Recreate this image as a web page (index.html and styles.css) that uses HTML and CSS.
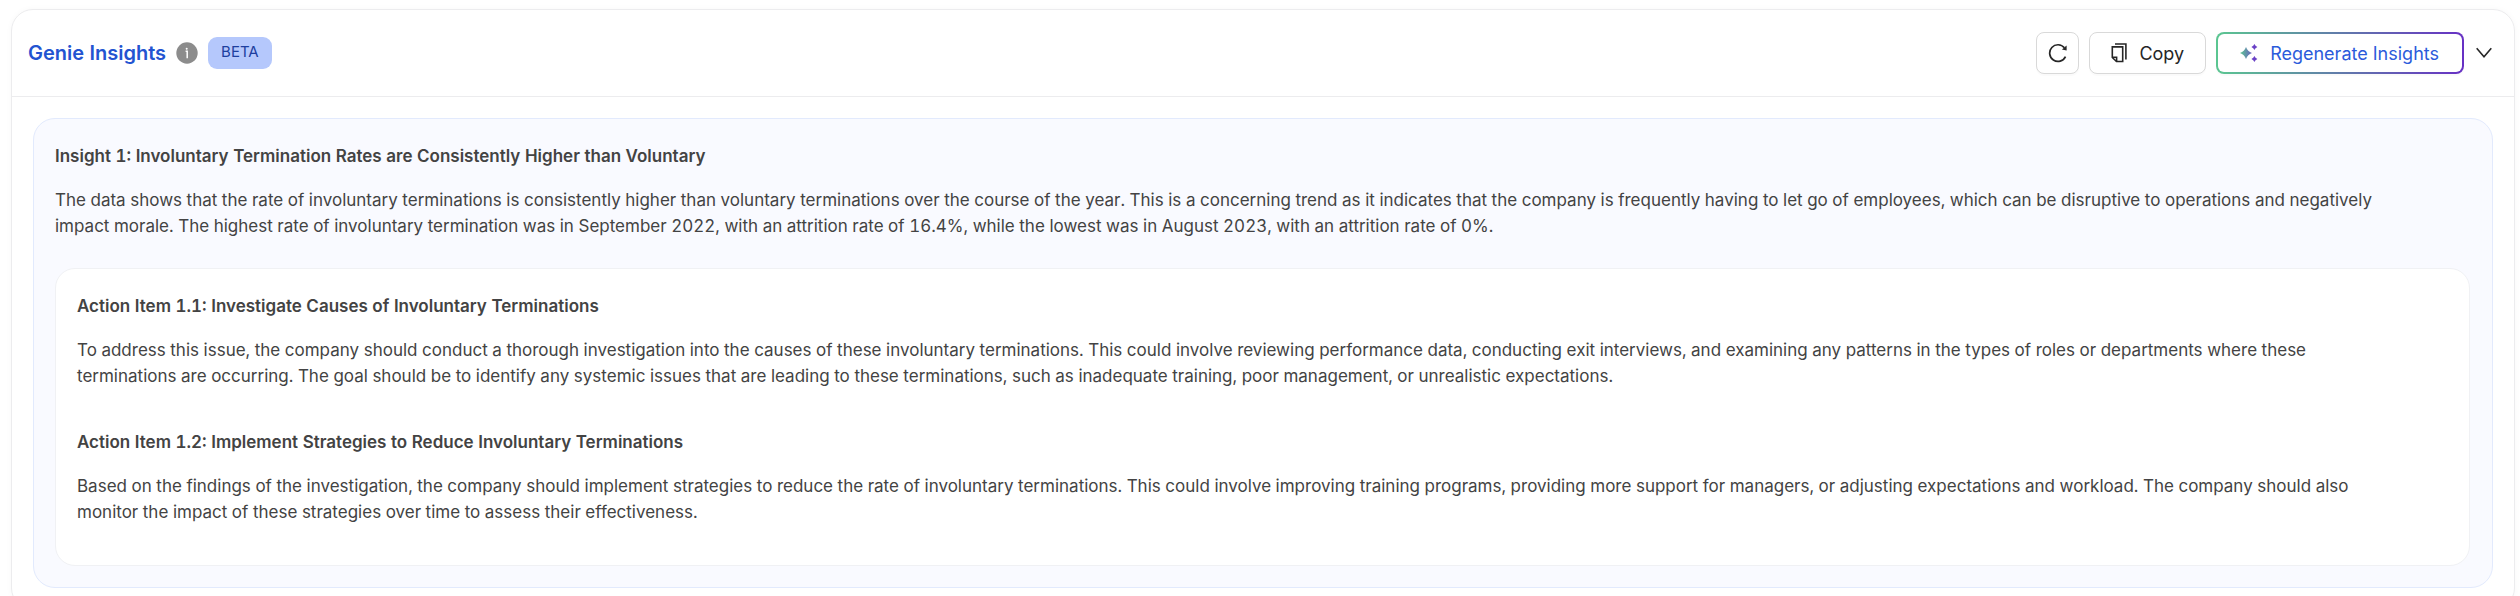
FILE: index.html
```html
<!DOCTYPE html>
<html lang="en">
<head>
<meta charset="utf-8">
<title>Genie Insights</title>
<link rel="stylesheet" href="styles.css">
</head>
<body>
<section class="card">
  <header class="header">
    <h1 class="title">Genie Insights</h1>
    <svg class="info" viewBox="0 0 22 22" role="img" aria-label="Info">
      <circle cx="11" cy="11" r="10.7" fill="#8c8c8c"/>
      <circle cx="10.7" cy="6.7" r="1" fill="#fff"/>
      <path d="M9.6 9.2H11.2V16.2" fill="none" stroke="#fff" stroke-width="1.5"/>
    </svg>
    <span class="badge">BETA</span>
    <div class="actions">
      <button class="btn btn-icon" type="button" aria-label="Refresh">
        <svg class="icon-refresh" viewBox="0 0 20 20" fill="none" stroke="#262626" stroke-width="1.7">
          <path d="M17.5 13.6A8.3 8.3 0 1 1 16.4 4.8"/>
          <path d="M18.6 2.6V7.4L13.9 6.6Z" fill="#262626" stroke="none"/>
        </svg>
      </button>
      <button class="btn" type="button">
        <svg class="icon-copy" viewBox="0 0 16 20" fill="none" stroke="#262626" stroke-width="1.6">
          <path d="M1.3 3.9H11.7V18.5H5.5L1.3 14.5Z"/>
          <path d="M1.3 14.3H5.6V18.5"/>
          <path d="M4 1H14.9V16.6"/>
        </svg>
        Copy
      </button>
      <button class="btn btn-primary" type="button">
        <svg class="icon-sparkle" viewBox="0 0 18 18">
          <defs>
            <linearGradient id="spark" x1="0" y1="0" x2="1" y2="0">
              <stop offset="0" stop-color="#5bc691"/>
              <stop offset="1" stop-color="#6a62c0"/>
            </linearGradient>
          </defs>
          <path d="M6 3Q7.6 7.4 12 9Q7.6 10.6 6 15Q4.4 10.6 0 9Q4.4 7.4 6 3Z" fill="url(#spark)"/>
          <path d="M14.4 0Q15.2 2.2 17.4 3Q15.2 3.8 14.4 6Q13.6 3.8 11.4 3Q13.6 2.2 14.4 0Z" fill="#6a41c6"/>
          <path d="M14.4 12Q15.2 14.2 17.4 15Q15.2 15.8 14.4 18Q13.6 15.8 11.4 15Q13.6 14.2 14.4 12Z" fill="#6a41c6"/>
        </svg>
        Regenerate Insights
      </button>
      <button class="toggle" type="button" aria-label="Collapse">
        <svg class="icon-chevron" viewBox="0 0 16 12" fill="none" stroke="#262626" stroke-width="1.6">
          <path d="M.7 1.3L8 9.7L15.3 1.3"/>
        </svg>
      </button>
    </div>
  </header>
  <div class="content">
    <article class="insight">
      <h2 class="heading">Insight 1: Involuntary Termination Rates are Consistently Higher than Voluntary</h2>
      <p class="text">The data shows that the rate of involuntary terminations is consistently higher than voluntary terminations over the course of the year. This is a concerning trend as it indicates that the company is frequently having to let go of employees, which can be disruptive to operations and negatively impact morale. The highest rate of involuntary termination was in September 2022, with an attrition rate of 16.4%, while the lowest was in August 2023, with an attrition rate of 0%.</p>
      <div class="items">
        <section class="item">
          <h3 class="heading">Action Item 1.1: Investigate Causes of Involuntary Terminations</h3>
          <p class="text">To address this issue, the company should conduct a thorough investigation into the causes of these involuntary terminations. This could involve reviewing performance data, conducting exit interviews, and examining any patterns in the types of roles or departments where these terminations are occurring. The goal should be to identify any systemic issues that are leading to these terminations, such as inadequate training, poor management, or unrealistic expectations.</p>
        </section>
        <section class="item">
          <h3 class="heading">Action Item 1.2: Implement Strategies to Reduce Involuntary Terminations</h3>
          <p class="text">Based on the findings of the investigation, the company should implement strategies to reduce the rate of involuntary terminations. This could involve improving training programs, providing more support for managers, or adjusting expectations and workload. The company should also monitor the impact of these strategies over time to assess their effectiveness.</p>
        </section>
      </div>
    </article>
  </div>
</section>
</body>
</html>
```
FILE: styles.css
```css
* {
  box-sizing: border-box;
}

html {
  overflow: hidden;
}

body {
  margin: 0;
  padding: 9px 5px 0 11px;
  background: #fff;
  color: #434343;
  font-family: Inter, "Liberation Sans", sans-serif;
  font-size: 17px;
  font-variant-numeric: tabular-nums;
  line-height: 26px;
}

.card {
  min-height: 100vh;
  border: 1px solid #ececee;
  border-radius: 22px;
  box-shadow: 0 0 6px rgba(0, 0, 0, 0.03);
}

.header {
  display: flex;
  align-items: center;
  height: 87px;
  padding: 0 20px 0 16px;
  border-bottom: 1px solid #ececee;
}

.title {
  margin: 0;
  color: #2354d1;
  font-size: 20px;
  font-weight: 600;
}

.info {
  width: 22px;
  height: 22px;
  margin: 0 10px;
}

.badge {
  padding: 0 13px 2px;
  border-radius: 9px;
  background: #b5c8fc;
  color: #1d3f9f;
  font-size: 15px;
  line-height: 30px;
}

.actions {
  display: flex;
  align-items: center;
  gap: 10px;
  margin-left: auto;
}

.btn {
  display: flex;
  align-items: center;
  gap: 12px;
  height: 42px;
  padding: 0 21px;
  border: 1px solid #d9d9d9;
  border-radius: 8px;
  background: #fff;
  box-shadow: 0 2px 1px rgba(0, 0, 0, 0.02);
  color: #262626;
  font-family: inherit;
  font-size: 18px;
}

.btn-icon {
  justify-content: center;
  width: 43px;
  padding: 0;
}

.btn-primary {
  padding: 0 23px 0 22px;
  border: 2px solid transparent;
  background: linear-gradient(#fff, #fff) padding-box, linear-gradient(90deg, #5bc691, #6730c4) border-box;
  color: #2b5bdb;
}

.icon-refresh {
  width: 20px;
  height: 20px;
}

.icon-copy {
  width: 16px;
  height: 20px;
}

.icon-sparkle {
  width: 18px;
  height: 18px;
}

.toggle {
  display: flex;
  padding: 2px;
  border: 0;
  background: none;
}

.icon-chevron {
  width: 16px;
  height: 12px;
}

.content {
  padding: 21px;
}

.insight {
  padding: 24px 22px 21px 21px;
  border: 1px solid #e2eafd;
  border-radius: 22px;
  background: #f9faff;
}

.heading {
  margin: 0 0 18px;
  font-size: 17px;
  font-weight: 600;
}

.text {
  margin: 0;
  padding-right: 40px;
}

.items {
  margin-top: 29px;
  padding: 24px 21px 0;
  border: 1px solid #f0f1f4;
  border-radius: 20px;
  background: #fff;
}

.item {
  padding-bottom: 40px;
}
```
